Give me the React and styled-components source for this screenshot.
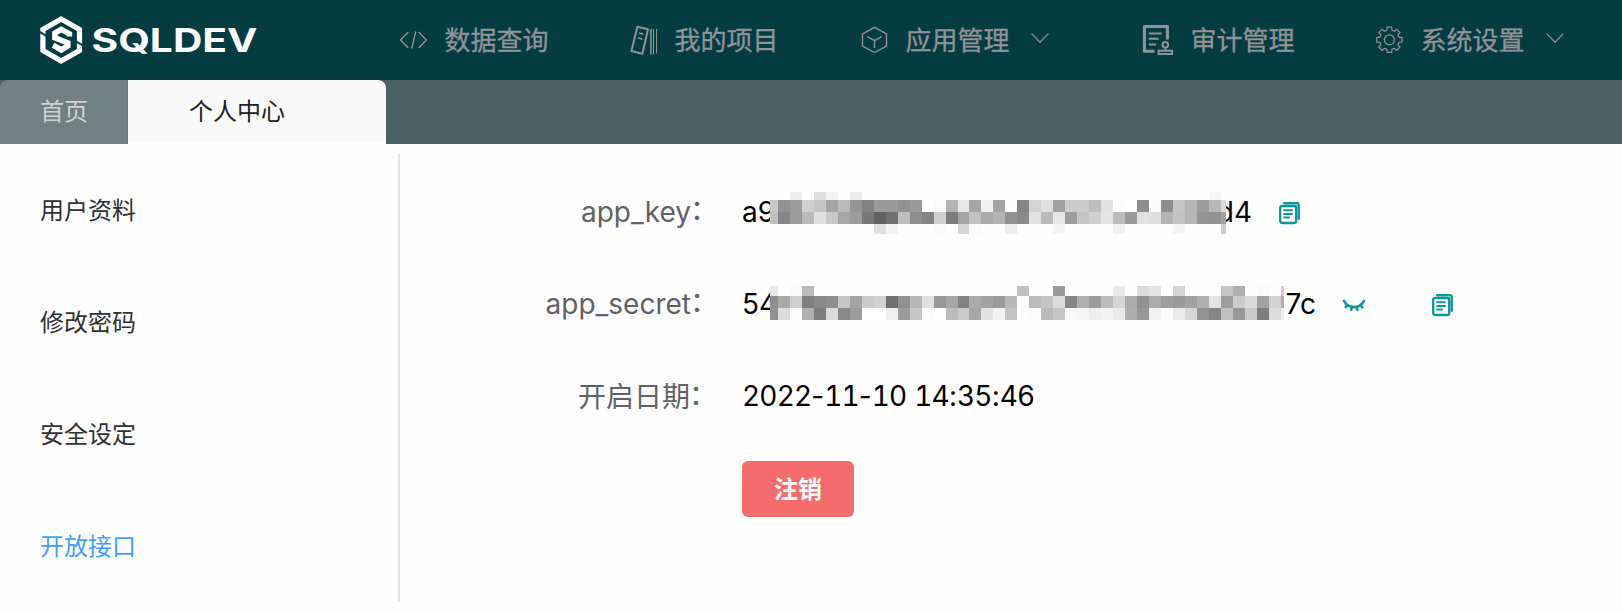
import React from 'react';
import styled, { createGlobalStyle } from 'styled-components';

const GlobalStyle = createGlobalStyle`
  * { box-sizing: border-box; }
  body {
    margin: 0;
    background: #fefefe;
    font-family: Inter, "Noto Sans CJK SC", sans-serif;
    color: #000;
    overflow: hidden;
  }
`;

const Page = styled.div`
  display: flex;
  flex-direction: column;
  width: 1622px;
  height: 612px;
`;

const Header = styled.header`
  display: flex;
  align-items: center;
  height: 80px;
  flex: none;
  padding-left: 38px;
  background: #053c41;
`;

const LogoSvg = styled.svg`
  width: 222px;
  height: 52px;
  flex: none;
  margin-right: 139px;
`;

const Nav = styled.nav`
  display: flex;
  align-items: center;
`;

const NavItem = styled.a`
  display: flex;
  align-items: center;
  margin-right: ${(p) => p.$after}px;
  color: #909399;
  font-size: 26px;
  line-height: 40px;
  white-space: nowrap;
`;

const NavText = styled.span`
  padding-top: 2px;
  margin: 0 0.5px 0 -0.5px;
  -webkit-text-stroke: 0.3px currentColor;
`;

const NavIcon = styled.svg`
  width: 30px;
  height: 30px;
  margin-right: 16px;
  fill: none;
  stroke: currentColor;
  stroke-width: ${(p) => p.$weight || 1.4};
  overflow: visible;
`;

const Chevron = styled.svg`
  width: 18px;
  height: 10px;
  margin: -5px 0 0 21px;
  fill: none;
  stroke: currentColor;
  stroke-width: 1.3;
`;

const TabBar = styled.div`
  display: flex;
  height: 64px;
  flex: none;
  background: #4a6266;
`;

const Tab = styled.div`
  width: ${(p) => p.$width}px;
  padding-left: ${(p) => p.$pad}px;
  font-size: 24px;
  line-height: 64px;
  color: ${(p) => (p.$active ? '#222' : '#d0d2d2')};
  background: ${(p) => (p.$active ? '#f9f9f9' : '#718080')};
  border-radius: ${(p) => (p.$active ? '0 8px 0 0' : '8px 0 0 0')};
  box-shadow: ${(p) => (p.$active ? 'inset 0 -2px #fefefe, 0 0 3px rgba(0, 0, 0, 0.2)' : 'none')};
  clip-path: inset(0 0 0 -4px);
`;

const Body = styled.div`
  display: flex;
  padding-top: 10px;
`;

const Sidebar = styled.aside`
  width: 400px;
  height: 448px;
  border-right: 2px solid #e4e4e4;
`;

const SideItem = styled.div`
  height: 112px;
  padding-left: 40px;
  font-size: 24px;
  line-height: 114px;
  color: ${(p) => (p.$active ? '#409eff' : '#303133')};
`;

const Form = styled.main`
  flex: 1;
  padding-top: 12px;
`;

const Row = styled.div`
  display: flex;
  align-items: center;
  height: 92px;
`;

const Label = styled.div`
  width: ${(p) => (p.$cjk ? 318 : 319)}px;
  margin-right: ${(p) => (p.$cjk ? 24 : 23)}px;
  padding-top: ${(p) => (p.$cjk ? 2 : 0)}px;
  text-align: right;
  font-size: 28px;
  line-height: 40px;
  color: #606266;
  white-space: nowrap;
`;

const Colon = styled.span`
  position: relative;
  top: -2px;
  left: -1px;
`;

const Value = styled.div`
  display: flex;
  align-items: center;
  font-size: 28px;
  line-height: 40px;
  white-space: nowrap;
`;

const DateText = styled.span`
  white-space: pre;
`;

const Digits = styled.span`
  font-variant-numeric: tabular-nums;
  letter-spacing: -0.83px;
`;

const KeyPart = styled.span`
  display: flex;
  justify-content: ${(p) => (p.$end ? 'flex-end' : 'flex-start')};
  width: ${(p) => p.$width}px;
`;

const MosaicGrid = styled.div`
  position: relative;
  z-index: 1;
  display: grid;
  grid-template-columns: ${(p) => p.$columns};
  grid-template-rows: ${(p) => p.$rows};
  margin-top: ${(p) => p.$shift}px;
`;

const Cell = styled.i`
  background: ${(p) => `#${p.$shade}${p.$shade}${p.$shade}`};
`;

const ActionIcon = styled.svg`
  width: 22px;
  height: 22px;
  margin: 2px 0 0 ${(p) => p.$gap}px;
  fill: none;
  stroke: #0a989d;
  stroke-width: 2.3;
  overflow: visible;
`;

const DangerButton = styled.button`
  display: block;
  width: 112px;
  height: 56px;
  margin: 19px 0 0 342px;
  padding: 2px 0 0;
  border: 0;
  border-radius: 6px;
  background: #f56c6c;
  color: #fff;
  font: bold 24px/54px Inter, "Noto Sans CJK SC", sans-serif;
`;

const gearPath = () => {
  const pts = [];
  for (let k = 0; k < 8; k += 1) {
    const a = (k * Math.PI) / 4 - Math.PI / 2;
    [[-0.25, 9.9], [-0.19, 12.9], [0.19, 12.9], [0.25, 9.9]].forEach(([d, r]) => {
      pts.push(`${(14.4 + r * Math.cos(a + d)).toFixed(2)} ${(14.8 + r * Math.sin(a + d)).toFixed(2)}`);
    });
  }
  return `M${pts.join('L')}Z`;
};

const icons = {
  code: <path d="M9.3 7L1.5 15l7.8 8M16.7 6.5l-4 17M19.5 7l7.9 8-7.9 8" />,
  books: (
    <>
      <path strokeWidth="2" strokeLinejoin="round" d="M8.4 1.7L19 4.3 13.4 28.8 2.4 26z" />
      <path strokeWidth="1.6" d="M10 8l4.4 1.2M9 12.8l4.4 1.4" />
      <path strokeWidth="1.6" d="M22 4v25.5" />
      <path strokeWidth="1" d="M24.5 4v25.5M27.5 4v24.5" />
    </>
  ),
  cube: <path d="M14.5 2.4l12 6.4v12.4l-12 6.3-12-6.3V8.8zM7.4 11.7l7.1 4 7.1-4M14.5 15.7V23" />,
  audit: (
    <>
      <path strokeWidth="3.1" strokeLinejoin="round" d="M9.5 26.3H-.6V1.5h23V14.6" />
      <path strokeWidth="2" d="M3.7 8.4h13M3.7 13.8h10M3.7 19.4H11" />
      <circle cx="20.3" cy="19.8" r="2.8" strokeWidth="2" />
      <path strokeWidth="1.9" d="M20.3 22.6v3M13.5 25.7h13.6v3.3H13.5z" />
    </>
  ),
  gear: (
    <>
      <path strokeLinejoin="round" d={gearPath()} />
      <circle cx="14.4" cy="14.8" r="5" />
    </>
  ),
};

const navItems = [
  { icon: 'code', text: '数据查询', after: 80 },
  { icon: 'books', text: '我的项目', after: 81 },
  { icon: 'cube', text: '应用管理', after: 96, menu: true },
  { icon: 'audit', text: '审计管理', after: 80 },
  { icon: 'gear', text: '系统设置', after: 0, menu: true },
];

const keyShades = [
  'fe fe ee fe e0 f2 fe ea fe fe fe fe fe fe fe fe fe fe fe fe fe fe fe fe fe fe fe fe fe fe fe fe fe fe fe fe fe f5 fe',
  'c8 92 9c d0 c6 a4 ba 94 82 9b 9b 91 9b ff fc b4 e8 a6 f0 a4 fc 86 d4 e0 a2 cc cc be e2 fd ff 8e fb 8e c6 b6 9c b8 dc',
  'c0 86 9c ba e0 c8 a6 9c 78 62 70 be 8e 84 d0 7c a4 c2 aa b4 92 8a e2 ba e6 9c c6 d0 e4 bc 9a e0 de b4 c4 b6 94 92 a2',
  'fe fe fe fe fe fe fe fe fe e0 f2 fe fe fe fb fe d4 fa fe fe ec fe fe fe f4 fe fe fe fe f0 fe fe fe fe f4 fe fe fe cc',
];

const secretShades = [
  'ea fe fa bc fe fe fe fe fe fe fe fe fe fe fe fe fe fe fe fe fe c0 fe fe 9a fe fe fd fe ea fe dc e4 fe d4 fe fe fe c6 b0 fe fa fe ce',
  '8e aa d0 7e 8a 8e c6 a4 cc d2 70 90 b8 e0 98 a6 82 ac a2 9a b8 ff bc c4 dc 86 b0 9c bc d6 ac 90 ac 9e 9a a2 b0 e4 9e cc da a2 d2 b0',
  '90 dc fd b0 7e dc 8a 9c ff ff f0 9c c6 fc ff bc ca a6 e2 f2 c2 ff fd ba c6 f7 f5 ee f4 ea ae 98 f2 fc ea d6 94 86 c0 98 ca 7e dc ee',
];

function Mosaic({ shades, columns, rows, shift }) {
  return (
    <MosaicGrid $columns={columns} $rows={rows} $shift={shift}>
      {shades.join(' ').split(' ').map((s, i) => <Cell key={i} $shade={s} />)}
    </MosaicGrid>
  );
}

function CopyIcon({ gap }) {
  return (
    <ActionIcon $gap={gap} viewBox="0 0 22 22">
      <path strokeWidth="3" stroke="#8fd0d2" d="M5 2.8h12.2q1.4 0 1.4 1.4v13" />
      <path strokeWidth="2" strokeLinecap="round" d="M5 1h13q1.9 0 1.9 1.9v14" />
      <rect x="1.2" y="4" width="16" height="17" rx="2" fill="#fefefe" />
      <path strokeWidth="2" d="M4.3 8.2h9.4M4.3 11.9h9.4M4.3 15.5h6.4" />
    </ActionIcon>
  );
}

function EyeClosedIcon({ gap }) {
  return (
    <ActionIcon $gap={gap} viewBox="0 0 22 22" strokeLinecap="round">
      <path strokeWidth="2.6" d="M1 6.8Q4.5 13 11 13T21 6.8M4.2 11.2l-1.4 2M9 13.2l-.8 2.6M13.6 13.2l.8 2.6M17.9 11.2l1.4 2" />
    </ActionIcon>
  );
}

function Logo() {
  return (
    <LogoSvg viewBox="38 14 222 52">
      <g fill="none" stroke="#fff" strokeWidth="5.2">
        <path d="M61.2 18.9l18.3 10.6v21L61.2 61 42.9 50.5v-21z" />
        <path strokeWidth="5.6" d="M69.4 36.4v-2.6L61.3 29.4l-6.4 3.7v4.7l12.9 5v3.2L61.3 50l-8.2-4.8" />
      </g>
      <path stroke="#053c41" strokeWidth="2" d="M38.5 31.2l8.5 5.2M75.5 41.2l8.5 5" />
      <text
        x="91.5"
        y="51.8"
        textLength="166"
        lengthAdjust="spacingAndGlyphs"
        fontFamily="Inter, sans-serif"
        fontWeight="700"
        fontSize="32.5"
        fill="#fff"
      >
        SQLDEV
      </text>
    </LogoSvg>
  );
}

function Timestamp({ value }) {
  return (
    <DateText>
      {value.split(/([-: ])/).map((part, i) => (i % 2 ? part : <Digits key={i}>{part}</Digits>))}
    </DateText>
  );
}

export default function App() {
  return (
    <Page>
      <GlobalStyle />
      <Header>
        <Logo />
        <Nav>
          {navItems.map((item) => (
            <NavItem key={item.icon} $after={item.after}>
              <NavIcon viewBox="0 0 30 30" $weight={item.icon === 'gear' ? 1.2 : 1.4}>{icons[item.icon]}</NavIcon>
              <NavText>{item.text}</NavText>
              {item.menu && (
                <Chevron viewBox="0 0 18 10"><path d="M.6.6L9 9.2 17.4.6" /></Chevron>
              )}
            </NavItem>
          ))}
        </Nav>
      </Header>
      <TabBar>
        <Tab $width={128} $pad={40}>首页</Tab>
        <Tab $width={258} $pad={61} $active>个人中心</Tab>
      </TabBar>
      <Body>
        <Sidebar>
          <SideItem>用户资料</SideItem>
          <SideItem>修改密码</SideItem>
          <SideItem>安全设定</SideItem>
          <SideItem $active>开放接口</SideItem>
        </Sidebar>
        <Form>
          <Row>
            <Label>app_key<Colon>：</Colon></Label>
            <Value>
              <KeyPart $width={28}>a9</KeyPart>
              <Mosaic
                shades={keyShades}
                columns="8px repeat(15, 12px) 11px repeat(21, 12px) 5px"
                rows="8px 12px 12px 10px"
                shift={2}
              />
              <KeyPart $width={26} $end>d4</KeyPart>
            </Value>
            <CopyIcon gap={27} />
          </Row>
          <Row>
            <Label>app_secret<Colon>：</Colon></Label>
            <Value>
              <KeyPart $width={28}>54</KeyPart>
              <Mosaic
                shades={secretShades}
                columns="8px repeat(15, 12px) 11px repeat(26, 12px) 3px"
                rows="10px 12px 12px"
                shift={-2}
              />
              <KeyPart $width={32} $end>7c</KeyPart>
            </Value>
            <EyeClosedIcon gap={27} />
            <CopyIcon gap={67} />
          </Row>
          <Row>
            <Label $cjk>开启日期<Colon>：</Colon></Label>
            <Value><Timestamp value="2022-11-10 14:35:46" /></Value>
          </Row>
          <DangerButton>注销</DangerButton>
        </Form>
      </Body>
    </Page>
  );
}
